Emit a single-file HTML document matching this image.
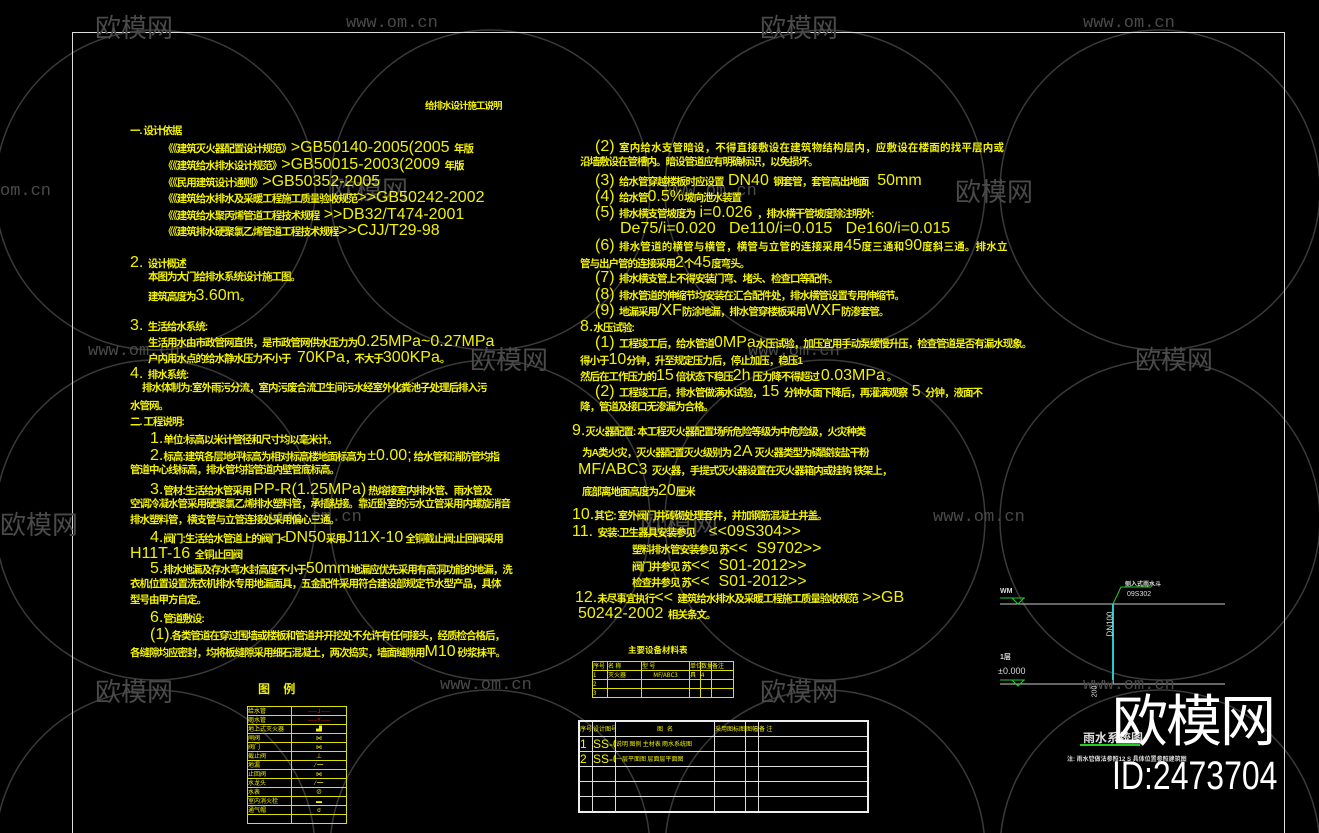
<!DOCTYPE html>
<html><head><meta charset="utf-8"><style>
html,body{margin:0;padding:0;background:#000;width:1319px;height:833px;overflow:hidden;position:relative}
.t{position:absolute;white-space:nowrap;color:#f2f200;font-family:"Liberation Sans","Noto Sans CJK SC",sans-serif;font-size:10.5px;letter-spacing:-1px;line-height:1;font-weight:bold}
.l{font-size:16px;font-weight:normal;letter-spacing:0}
.l b{font-size:10.5px!important;letter-spacing:-1px}
.l.wide b{letter-spacing:0.2px}
.wm{position:absolute;color:#4a4a4a;font-family:"Liberation Sans","Noto Sans CJK SC",sans-serif;font-size:26px;white-space:nowrap}
.url{position:absolute;color:#4a4a4a;font-family:"Liberation Mono",monospace;font-size:17px}
table{border-collapse:collapse;position:absolute;table-layout:fixed}
td{border:1px solid #e0e000;padding:0;font-size:6px;line-height:1;color:#f2f200;font-family:"Noto Sans CJK SC",sans-serif;height:8px;overflow:hidden;white-space:nowrap}
.w td{border:1px solid #ddd;height:14px;font-size:6px}
.w .n{font-size:12px;font-family:"Liberation Sans",sans-serif}
</style></head><body>
<svg width="1319" height="833" style="position:absolute;left:0;top:0">
<g fill="none" stroke="#3a3a3a" stroke-width="1.5">
<circle cx="155" cy="190" r="160"/><circle cx="490" cy="190" r="160"/><circle cx="825" cy="190" r="160"/><circle cx="1160" cy="190" r="160"/>
<circle cx="155" cy="520" r="160"/><circle cx="490" cy="520" r="160"/><circle cx="825" cy="520" r="160"/><circle cx="1160" cy="520" r="160"/>
<circle cx="155" cy="850" r="160"/><circle cx="490" cy="850" r="160"/><circle cx="825" cy="850" r="160"/><circle cx="1160" cy="850" r="160"/>
</g>
<rect x="72.5" y="32.5" width="1212" height="820" fill="none" stroke="#ddd"/>
<line x1="1000" y1="604" x2="1225" y2="604" stroke="#ccc"/>
<line x1="1000" y1="684" x2="1225" y2="684" stroke="#ccc"/>
<line x1="1000" y1="598" x2="1025" y2="598" stroke="#2c2"/>
<line x1="1000" y1="680" x2="1025" y2="680" stroke="#2c2"/>
<path d="M1012 598 l6 6 l6 -6 M1012 680 l6 6 l6 -6" stroke="#2c2" fill="none"/>
<line x1="1113" y1="604" x2="1113" y2="684" stroke="#2cc" stroke-width="2"/>
<path d="M1113 604 l8 -17 h30" stroke="#2c2" fill="none"/>
<line x1="1080" y1="745" x2="1140" y2="745" stroke="#2c2" stroke-width="2"/>
</svg>
<div class="wm" style="left:95px;top:8px">欧模网</div>
<div class="url" style="left:346px;top:14px">www.om.cn</div>
<div class="wm" style="left:760px;top:8px">欧模网</div>
<div class="url" style="left:1083px;top:14px">www.om.cn</div>
<div class="url" style="left:0px;top:182px">om.cn</div>
<div class="wm" style="left:330px;top:170px">欧模网</div>
<div class="url" style="left:665px;top:182px">www.om.cn</div>
<div class="wm" style="left:955px;top:172px">欧模网</div>
<div class="url" style="left:88px;top:342px">www.om.cn</div>
<div class="wm" style="left:470px;top:340px">欧模网</div>
<div class="url" style="left:748px;top:342px">www.om.cn</div>
<div class="wm" style="left:1135px;top:340px">欧模网</div>
<div class="wm" style="left:0px;top:505px">欧模网</div>
<div class="url" style="left:270px;top:508px">www.om.cn</div>
<div class="wm" style="left:640px;top:505px">欧模网</div>
<div class="url" style="left:933px;top:508px">www.om.cn</div>
<div class="wm" style="left:95px;top:672px">欧模网</div>
<div class="url" style="left:440px;top:676px">www.om.cn</div>
<div class="wm" style="left:760px;top:672px">欧模网</div>
<div class="url" style="left:1083px;top:676px">www.om.cn</div>

<div class="t" style="left:425px;top:102px;font-size:9.5px">给排水设计施工说明</div>
<div class="t" style="left:130px;top:126px">一. 设计依据</div>
<div class="t l" style="left:163px;top:140px"><b>《《建筑灭火器配置设计规范》</b>&gt;GB50140-2005(2005 <b>年版</b></div>
<div class="t l" style="left:163px;top:157px"><b>《《建筑给水排水设计规范》</b>&gt;GB50015-2003(2009 <b>年版</b></div>
<div class="t l" style="left:163px;top:174px"><b>《《民用建筑设计通则》</b>&gt;GB50352-2005</div>
<div class="t l" style="left:163px;top:190px"><b>《《建筑给水排水及采暖工程施工质量验收规范</b>&gt;&gt;GB50242-2002</div>
<div class="t l" style="left:163px;top:207px"><b>《《建筑给水聚丙烯管道工程技术规程</b> &gt;&gt;DB32/T474-2001</div>
<div class="t l" style="left:163px;top:223px"><b>《《建筑排水硬聚氯乙烯管道工程技术规程</b>&gt;&gt;CJJ/T29-98</div>
<div class="t l" style="left:130px;top:255px">2. <b>设计概述</b></div>
<div class="t" style="left:148px;top:272px">本图为大门给排水系统设计施工图。</div>
<div class="t" style="left:148px;top:288px">建筑高度为<span class="l">3.60m</span>。</div>
<div class="t l" style="left:130px;top:318px">3. <b>生活给水系统:</b></div>
<div class="t" style="left:148px;top:334px">生活用水由市政管网直供，是市政管网供水压力为<span class="l">0.25MPa~0.27MPa</span></div>
<div class="t" style="left:148px;top:350px">户内用水点的给水静水压力不小于 <span class="l">&nbsp;70KPa</span>，不大于<span class="l">300KPa</span>。</div>
<div class="t l" style="left:130px;top:366px">4. <b>排水系统:</b></div>
<div class="t" style="left:142px;top:383px">排水体制为:室外雨污分流，室内污废合流卫生间污水经室外化粪池子处理后排入污</div>
<div class="t" style="left:130px;top:401px">水管网。</div>
<div class="t" style="left:130px;top:417px">二. 工程说明:</div>
<div class="t" style="left:150px;top:431px"><span class="l">1.</span>单位:标高以米计管径和尺寸均以毫米计。</div>
<div class="t" style="left:150px;top:448px"><span class="l">2.</span>标高:建筑各层地坪标高为相对标高楼地面标高为 <span class="l">±0.00;</span> 给水管和消防管均指</div>
<div class="t" style="left:130px;top:465px">管道中心线标高，排水管均指管道内壁管底标高。</div>
<div class="t" style="left:150px;top:482px"><span class="l">3.</span>管材:生活给水管采用 <span class="l">PP-R(1.25MPa)</span> 热熔接室内排水管、雨水管及</div>
<div class="t" style="left:130px;top:499px">空调冷凝水管采用硬聚氯乙烯排水塑料管，承插粘接。靠近卧室的污水立管采用内螺旋消音</div>
<div class="t" style="left:130px;top:515px">排水塑料管，横支管与立管连接处采用偏心三通。</div>
<div class="t" style="left:150px;top:530px"><span class="l">4.</span>阀门:生活给水管道上的阀门&lt;<span class="l">DN50</span>采用<span class="l">J11X-10</span> 全铜截止阀;止回阀采用</div>
<div class="t l" style="left:130px;top:546px">H11T-16 <b>全铜止回阀</b></div>
<div class="t" style="left:150px;top:561px"><span class="l">5.</span>排水地漏及存水弯水封高度不小于<span class="l">50mm</span>地漏应优先采用有高洞功能的地漏，洗</div>
<div class="t" style="left:130px;top:579px">衣机位置设置洗衣机排水专用地漏面具，五金配件采用符合建设部规定节水型产品，具体</div>
<div class="t" style="left:130px;top:595px">型号由甲方自定。</div>
<div class="t" style="left:150px;top:610px"><span class="l">6.</span>管道敷设:</div>
<div class="t" style="left:150px;top:627px"><span class="l">(1)</span>.各类管道在穿过围墙或楼板和管道井开挖处不允许有任何接头，经质检合格后，</div>
<div class="t" style="left:130px;top:644px">各缝隙均应密封，均将板缝隙采用细石混凝土，两次捣实，墙面缝隙用<span class="l">M10</span> 砂浆抹平。</div>
<div class="t" style="left:258px;top:683px;font-size:12px;letter-spacing:0">图 &nbsp;&nbsp;&nbsp;例</div>
<table style="left:247px;top:706px;width:100px">
<tr><td style="width:43px">给水管</td><td style="text-align:center;color:#d22">——J——</td></tr>
<tr><td>雨水管</td><td style="text-align:center;color:#d22">——Y——</td></tr>
<tr><td>地上式灭火器</td><td style="text-align:center">▟</td></tr>
<tr><td>闸阀</td><td style="text-align:center">⋈</td></tr>
<tr><td>阀门</td><td style="text-align:center">⋈</td></tr>
<tr><td>截止阀</td><td style="text-align:center">⊥</td></tr>
<tr><td>地漏</td><td style="text-align:center">⁄ ━</td></tr>
<tr><td>止回阀</td><td style="text-align:center">⋈</td></tr>
<tr><td>水龙头</td><td style="text-align:center">⁄ ━</td></tr>
<tr><td>水表</td><td style="text-align:center">⊘</td></tr>
<tr><td>室内消火栓</td><td style="text-align:center">▬</td></tr>
<tr><td>通气帽</td><td style="text-align:center">σ</td></tr>
<tr><td>&nbsp;</td><td></td></tr>
</table>

<div class="t l wide" style="left:595px;top:139px">(2) <b>室内给水支管暗设，不得直接敷设在建筑物结构层内，应敷设在楼面的找平层内或</b></div>
<div class="t" style="left:580px;top:157px">沿墙敷设在管槽内。暗设管道应有明确标识，以免损坏。</div>
<div class="t l" style="left:595px;top:173px">(3) <b>给水管穿越楼板时应设置</b> DN40 <b>钢套管，套管高出地面</b> &nbsp;50mm</div>
<div class="t l" style="left:595px;top:189px">(4) <b>给水管</b>0.5%<b>坡向泄水装置</b></div>
<div class="t l" style="left:595px;top:205px">(5) <b>排水横支管坡度为</b> i=0.026 <b>，排水横干管坡度除注明外:</b></div>
<div class="t l" style="left:620px;top:221px">De75/i=0.020 &nbsp;&nbsp;De110/i=0.015 &nbsp;&nbsp;De160/i=0.015</div>
<div class="t l wide" style="left:595px;top:238px">(6) <b>排水管道的横管与横管，横管与立管的连接采用</b>45<b>度三通和</b>90<b>度斜三通。排水立</b></div>
<div class="t" style="left:580px;top:255px">管与出户管的连接采用<span class="l">2</span>个<span class="l">45</span>度弯头。</div>
<div class="t l" style="left:595px;top:270px">(7) <b>排水横支管上不得安装门弯、堵头、检查口等配件。</b></div>
<div class="t l" style="left:595px;top:287px">(8) <b>排水管道的伸缩节均安装在汇合配件处，排水横管设置专用伸缩节。</b></div>
<div class="t l" style="left:595px;top:303px">(9) <b>地漏采用</b>/XF<b>防涂地漏，排水管穿楼板采用</b>WXF<b>防渗套管。</b></div>
<div class="t l" style="left:580px;top:319px">8.<b>水压试验:</b></div>
<div class="t l" style="left:595px;top:335px">(1) <b>工程竣工后，给水管道</b>0MPa<b>水压试验，加压宜用手动泵缓慢升压，检查管道是否有漏水现象。</b></div>
<div class="t" style="left:580px;top:352px">得小于<span class="l">10</span>分钟，升至规定压力后，停止加压，稳压1</div>
<div class="t" style="left:580px;top:368px">然后在工作压力的<span class="l">15</span> 倍状态下稳压<span class="l">2h</span> 压力降不得超过 <span class="l">0.03MPa</span> 。</div>
<div class="t l" style="left:595px;top:384px">(2) <b>工程竣工后，排水管做满水试验，</b>15 <b>分钟水面下降后，再灌满观察</b> 5 <b>分钟，液面不</b></div>
<div class="t" style="left:580px;top:402px">降，管道及接口无渗漏为合格。</div>
<div class="t l" style="left:572px;top:423px">9.<b>灭火器配置: 本工程灭火器配置场所危险等级为中危险级，火灾种类</b></div>
<div class="t" style="left:582px;top:444px">为A类火灾，灭火器配置灭火级别为 <span class="l">2A</span> 灭火器类型为磷酸铵盐干粉</div>
<div class="t l" style="left:578px;top:462px">MF/ABC3 <b>灭火器，手提式灭火器设置在灭火器箱内或挂钩 铁架上，</b></div>
<div class="t" style="left:582px;top:483px">底部离地面高度为<span class="l">20</span>厘米</div>
<div class="t l" style="left:572px;top:507px">10.<b>其它: 室外阀门井砖砌处理套井，并加钢筋混凝土井盖。</b></div>
<div class="t l" style="left:572px;top:524px">11. <b>安装:卫生器具安装参见</b> &nbsp;&nbsp;&lt;&lt;09S304&gt;&gt;</div>
<div class="t l" style="left:632px;top:541px"><b>塑料排水管安装参见 苏</b>&lt;&lt; &nbsp;S9702&gt;&gt;</div>
<div class="t l" style="left:632px;top:558px"><b>阀门井参见 苏</b>&lt;&lt; &nbsp;S01-2012&gt;&gt;</div>
<div class="t l" style="left:632px;top:574px"><b>检查井参见 苏</b>&lt;&lt; &nbsp;S01-2012&gt;&gt;</div>
<div class="t l" style="left:575px;top:590px">12.<b>未尽事宜执行</b>&lt;&lt; <b>建筑给水排水及采暖工程施工质量验收规范</b> &gt;&gt;GB</div>
<div class="t l" style="left:578px;top:606px">50242-2002 <b>相关条文。</b></div>
<div class="t" style="left:628px;top:646px;font-size:8.5px;letter-spacing:0">主要设备材料表</div>
<table style="left:592px;top:661px;width:142px">
<tr><td style="width:14px">序号</td><td style="width:33px">名 称</td><td style="width:47px">型 号</td><td style="width:10px">单位</td><td style="width:10px">数量</td><td>备注</td></tr>
<tr><td>1</td><td>灭火器</td><td style="text-align:center">MF/ABC3</td><td>具</td><td>4</td><td></td></tr>
<tr><td>2</td><td></td><td></td><td></td><td></td><td></td></tr>
<tr><td>3</td><td></td><td></td><td></td><td></td><td></td></tr>
</table>
<table class="w" style="left:578px;top:720px;width:291px;border:2px solid #eee">
<tr><td style="width:12px;height:11px">序号</td><td style="width:22px">设计图号</td><td style="width:98px;text-align:center">图 &nbsp;&nbsp;名</td><td style="width:30px">采用图标图号</td><td style="width:12px">图幅</td><td>备 注</td></tr>
<tr><td class="n">1</td><td class="n">SS-01</td><td>说明 图例 主材表 雨水系统图</td><td></td><td></td><td></td></tr>
<tr><td class="n">2</td><td class="n">SS-02</td><td>一层平面图 层面层平面图</td><td></td><td></td><td></td></tr>
<tr><td></td><td></td><td></td><td></td><td></td><td></td></tr>
<tr><td></td><td></td><td></td><td></td><td></td><td></td></tr>
<tr><td style="height:11px"></td><td></td><td></td><td></td><td></td><td></td></tr>
</table>

<div class="t" style="left:1000px;top:588px;font-size:7px;color:#ddd;letter-spacing:0">WM</div>
<div class="t" style="left:1125px;top:582px;font-size:6px;color:#ddd;letter-spacing:0">侧入式雨水斗</div>
<div class="t" style="left:1127px;top:591px;font-size:7px;color:#ddd;font-weight:normal;letter-spacing:0">09S302</div>
<div class="t" style="left:1098px;top:620px;font-size:8px;color:#ddd;transform:rotate(-90deg);font-weight:normal;letter-spacing:0">DN100</div>
<div class="t" style="left:1000px;top:654px;font-size:7px;color:#ddd;letter-spacing:0">1层</div>
<div class="t" style="left:998px;top:667px;font-size:9px;color:#ddd;font-weight:normal;letter-spacing:0">±0.000</div>
<div class="t" style="left:1089px;top:688px;font-size:7px;color:#ddd;transform:rotate(-90deg);font-weight:normal;letter-spacing:0">200</div>
<div class="t" style="left:1083px;top:732px;font-size:12px;color:#ddd;letter-spacing:0">雨水系统图</div>
<div class="t" style="left:1067px;top:757px;font-size:6px;color:#ddd;letter-spacing:0">注: 雨水管做法参照12 S 具体位置参照建筑图</div>
<div style="position:absolute;left:1112px;top:690px;color:#fff;font-family:'Noto Sans CJK SC',sans-serif;font-size:56px;line-height:1;letter-spacing:-2px">欧模网</div>
<div style="position:absolute;left:1112px;top:756px;color:#fff;font-family:'Liberation Sans',sans-serif;font-size:40px;line-height:1;transform:scaleX(0.8);transform-origin:left top">ID:2473704</div>
</body></html>
